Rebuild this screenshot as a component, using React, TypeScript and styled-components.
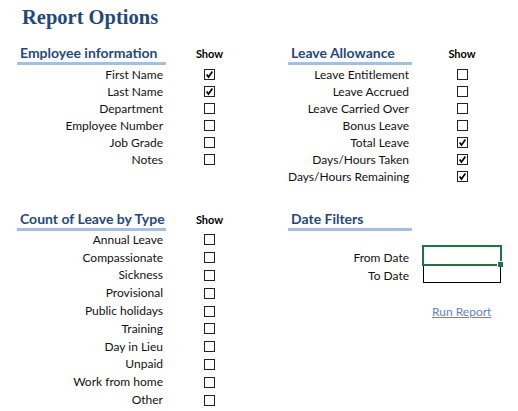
import styled, { createGlobalStyle } from "styled-components";

const GlobalStyle = createGlobalStyle`
  body {
    margin: 0;
    background: #ffffff;
    font-family: Lato, "Liberation Sans", sans-serif;
    color: #111111;
  }
`;

type Item = { label: string; checked?: boolean };

const employeeItems: Item[] = [
  { label: "First Name", checked: true },
  { label: "Last Name", checked: true },
  { label: "Department" },
  { label: "Employee Number" },
  { label: "Job Grade" },
  { label: "Notes" },
];

const allowanceItems: Item[] = [
  { label: "Leave Entitlement" },
  { label: "Leave Accrued" },
  { label: "Leave Carried Over" },
  { label: "Bonus Leave" },
  { label: "Total Leave", checked: true },
  { label: "Days/Hours Taken", checked: true },
  { label: "Days/Hours Remaining", checked: true },
];

const leaveTypes: Item[] = [
  { label: "Annual Leave" },
  { label: "Compassionate" },
  { label: "Sickness" },
  { label: "Provisional" },
  { label: "Public holidays" },
  { label: "Training" },
  { label: "Day in Lieu" },
  { label: "Unpaid" },
  { label: "Work from home" },
  { label: "Other" },
];

function CheckBox({ checked }: { checked?: boolean }) {
  return (
    <svg width="11" height="11" viewBox="0 0 11 11">
      <rect x="0.5" y="0.5" width="10" height="10" fill="#fff" stroke="#222" />
      {checked && (
        <path d="M2.6 5.4 L4.5 8 L8.4 2.6" fill="none" stroke="#000" strokeWidth="1.7" />
      )}
    </svg>
  );
}

type SectionProps = {
  title: string;
  items: Item[];
  labelWidth: number;
  showWidth: number;
  rowHeight: number;
  gapTop: number;
};

function OptionSection({ title, items, labelWidth, showWidth, rowHeight, gapTop }: SectionProps) {
  return (
    <Section>
      <HeaderRow $labelWidth={labelWidth} $showWidth={showWidth}>
        <SectionTitle>{title}</SectionTitle>
        <ShowHead>Show</ShowHead>
      </HeaderRow>
      <Rows $gapTop={gapTop}>
        {items.map((item) => (
          <Row key={item.label} $labelWidth={labelWidth} $showWidth={showWidth} $height={rowHeight}>
            <Label>{item.label}</Label>
            <CheckCell>
              <CheckBox checked={item.checked} />
            </CheckCell>
          </Row>
        ))}
      </Rows>
    </Section>
  );
}

function App() {
  return (
    <Page>
      <GlobalStyle />
      <Title>Report Options</Title>
      <Board>
        <OptionSection
          title="Employee information"
          items={employeeItems}
          labelWidth={149}
          showWidth={87}
          rowHeight={17}
          gapTop={1}
        />
        <OptionSection
          title="Leave Allowance"
          items={allowanceItems}
          labelWidth={124}
          showWidth={100}
          rowHeight={17}
          gapTop={1}
        />
        <OptionSection
          title="Count of Leave by Type"
          items={leaveTypes}
          labelWidth={149}
          showWidth={87}
          rowHeight={17.8}
          gapTop={0}
        />
        <Section>
          <HeaderRow $labelWidth={124} $showWidth={100}>
            <SectionTitle>Date Filters</SectionTitle>
          </HeaderRow>
          <DateGrid>
            <DateLabel $pad={1}>From Date</DateLabel>
            <DateBox $selected>
              <Handle />
            </DateBox>
            <DateLabel $pad={0}>To Date</DateLabel>
            <DateBox />
            <Spacer />
            <RunLink href="#">Run Report</RunLink>
          </DateGrid>
        </Section>
      </Board>
    </Page>
  );
}

export default App;

const Page = styled.div`
  width: 518px;
  height: 411px;
  padding-left: 17px;
  box-sizing: border-box;
  overflow: hidden;
`;

const Title = styled.h1`
  margin: 0;
  height: 44px;
  box-sizing: border-box;
  padding: 2px 0 0 5px;
  font-family: "Liberation Serif", serif;
  font-weight: bold;
  font-size: 20.5px;
  line-height: 30px;
  color: #1f497d;
`;

const Board = styled.div`
  display: grid;
  grid-template-columns: 271px 230px;
  row-gap: 25px;
  align-items: start;
`;

const Section = styled.div`
  display: flex;
  flex-direction: column;
`;

const HeaderRow = styled.div<{ $labelWidth: number; $showWidth: number }>`
  display: grid;
  grid-template-columns: ${(p) => p.$labelWidth}px ${(p) => p.$showWidth}px;
  align-items: baseline;
`;

const SectionTitle = styled.div`
  height: 18px;
  line-height: 18px;
  padding-left: 3px;
  border-bottom: 3px solid #a7bfde;
  font-size: 14px;
  font-weight: bold;
  color: #1f497d;
  white-space: nowrap;
`;

const ShowHead = styled.div`
  text-align: center;
  font-size: 11px;
  font-weight: bold;
  color: #000;
`;

const Rows = styled.div<{ $gapTop: number }>`
  display: flex;
  flex-direction: column;
  margin-top: ${(p) => p.$gapTop}px;
`;

const Row = styled.div<{ $labelWidth: number; $showWidth: number; $height: number }>`
  display: grid;
  grid-template-columns: ${(p) => p.$labelWidth}px ${(p) => p.$showWidth}px;
  height: ${(p) => p.$height}px;
  align-items: center;
`;

const Label = styled.div`
  text-align: right;
  padding-right: 3px;
  font-size: 12px;
  line-height: 14px;
  white-space: nowrap;
`;

const CheckCell = styled.div`
  display: flex;
  justify-content: center;
  align-items: center;
  height: 11px;
`;

const DateGrid = styled.div`
  display: grid;
  grid-template-columns: 124px 10px 80px;
  grid-template-rows: 21px 17px;
  margin-top: 14px;
`;

const DateLabel = styled.div<{ $pad: number }>`
  grid-column: 1;
  display: flex;
  justify-content: flex-end;
  align-items: flex-end;
  padding: 0 3px ${(p) => p.$pad}px 0;
  font-size: 12px;
  line-height: 14px;
`;

const DateBox = styled.div<{ $selected?: boolean }>`
  grid-column: 3;
  position: relative;
  box-sizing: border-box;
  border: ${(p) => (p.$selected ? "2px solid #217346" : "1px solid #000")};
  ${(p) => (p.$selected ? "" : "border-top: none; margin: 0 1px;")}
`;

const Handle = styled.span`
  position: absolute;
  right: -3px;
  bottom: -3px;
  width: 5px;
  height: 5px;
  background: #217346;
  border-left: 1px solid #fff;
  border-top: 1px solid #fff;
  box-sizing: content-box;
  z-index: 1;
`;

const Spacer = styled.div`
  grid-column: 1 / -1;
  height: 22px;
`;

const RunLink = styled.a`
  grid-column: 3;
  padding-left: 10px;
  font-size: 12px;
  line-height: 14px;
  color: #5f86c0;
  text-decoration: underline;
  white-space: nowrap;
`;
